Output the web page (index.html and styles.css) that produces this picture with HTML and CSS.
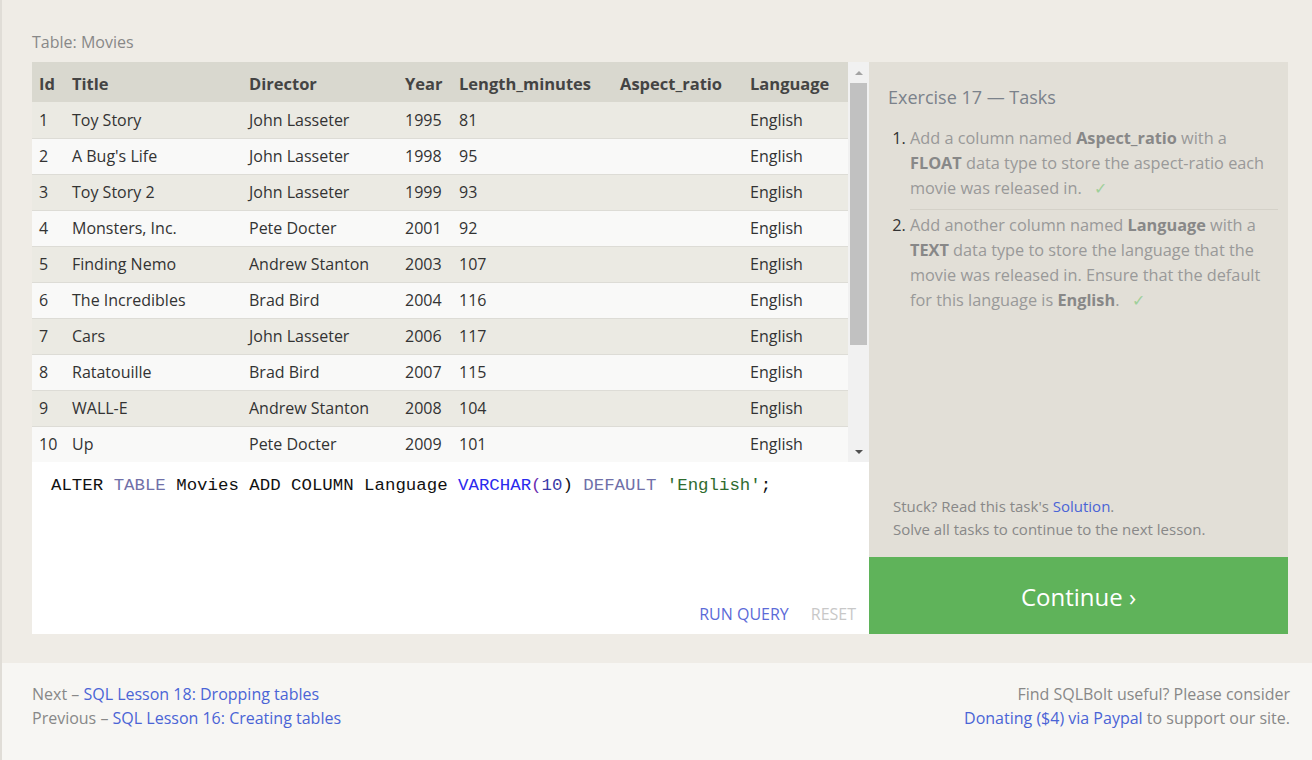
FILE: index.html
```html
<!DOCTYPE html>
<html>
<head>
<meta charset="utf-8">
<link rel="stylesheet" href="styles.css">
</head>
<body>
<div class="main">
  <div class="table-label">Table: Movies</div>
  <div class="lesson">
    <div class="left">
      <div class="results">
        <table class="movies">
          <colgroup>
            <col class="c-id"><col class="c-title"><col class="c-dir"><col class="c-year"><col class="c-len"><col class="c-asp"><col class="c-lang">
          </colgroup>
          <thead>
            <tr><th>Id</th><th>Title</th><th>Director</th><th>Year</th><th>Length_minutes</th><th>Aspect_ratio</th><th>Language</th></tr>
          </thead>
          <tbody>
            <tr><td>1</td><td>Toy Story</td><td>John Lasseter</td><td>1995</td><td>81</td><td></td><td>English</td></tr>
            <tr><td>2</td><td>A Bug's Life</td><td>John Lasseter</td><td>1998</td><td>95</td><td></td><td>English</td></tr>
            <tr><td>3</td><td>Toy Story 2</td><td>John Lasseter</td><td>1999</td><td>93</td><td></td><td>English</td></tr>
            <tr><td>4</td><td>Monsters, Inc.</td><td>Pete Docter</td><td>2001</td><td>92</td><td></td><td>English</td></tr>
            <tr><td>5</td><td>Finding Nemo</td><td>Andrew Stanton</td><td>2003</td><td>107</td><td></td><td>English</td></tr>
            <tr><td>6</td><td>The Incredibles</td><td>Brad Bird</td><td>2004</td><td>116</td><td></td><td>English</td></tr>
            <tr><td>7</td><td>Cars</td><td>John Lasseter</td><td>2006</td><td>117</td><td></td><td>English</td></tr>
            <tr><td>8</td><td>Ratatouille</td><td>Brad Bird</td><td>2007</td><td>115</td><td></td><td>English</td></tr>
            <tr><td>9</td><td>WALL-E</td><td>Andrew Stanton</td><td>2008</td><td>104</td><td></td><td>English</td></tr>
            <tr><td>10</td><td>Up</td><td>Pete Docter</td><td>2009</td><td>101</td><td></td><td>English</td></tr>
          </tbody>
        </table>
        <div class="scrollbar">
          <div class="arrow up"></div>
          <div class="track"><div class="thumb"></div></div>
          <div class="arrow down"></div>
        </div>
      </div>
      <div class="editor">
        <div class="code"><span class="k">ALTER</span> <span class="kw">TABLE</span> Movies ADD COLUMN Language <span class="ty">VARCHAR</span><span class="pn">(</span><span class="num">10</span>) <span class="kw">DEFAULT</span> <span class="str">'English'</span>;</div>
        <div class="actions">
          <span class="run">RUN QUERY</span>
          <span class="reset">RESET</span>
        </div>
      </div>
    </div>
    <div class="right">
      <div class="tasks">
        <div class="tasks-title">Exercise 17 — Tasks</div>
        <ol class="task-list">
          <li class="done">Add a column named <b>Aspect_ratio</b> with a <b>FLOAT</b> data type to store the aspect-ratio each movie was released in. <span class="check">✓</span></li>
          <li class="done">Add another column named <b>Language</b> with a <b>TEXT</b> data type to store the language that the movie was released in. Ensure that the default for this language is <b>English</b>. <span class="check">✓</span></li>
        </ol>
        <div class="spacer"></div>
        <div class="help">
          <div>Stuck? Read this task's <a class="link">Solution</a>.</div>
          <div>Solve all tasks to continue to the next lesson.</div>
        </div>
      </div>
      <div class="continue">Continue ›</div>
    </div>
  </div>
</div>
<div class="footer">
  <div class="nav">
    <div>Next – <a class="link">SQL Lesson 18: Dropping tables</a></div>
    <div>Previous – <a class="link">SQL Lesson 16: Creating tables</a></div>
  </div>
  <div class="donate">
    <div>Find SQLBolt useful? Please consider</div>
    <div><a class="link">Donating ($4) via Paypal</a> to support our site.</div>
  </div>
</div>
</body>
</html>
```

FILE: styles.css
```css
html, body {
  margin: 0;
  padding: 0;
}
body {
  background: #efece6;
  border-left: 2px solid #e0ddd7;
  font-family: "Open Sans", "Noto Sans", sans-serif;
  color: #444;
  height: 760px;
  box-sizing: border-box;
  overflow: hidden;
}
.main {
  padding: 31px 24px 29px 30px;
  height: 663px;
  box-sizing: border-box;
}
.table-label {
  font-size: 16px;
  color: #888;
  line-height: 22px;
  height: 31px;
}
.lesson {
  display: flex;
  height: 572px;
}
.left {
  width: 837px;
  display: flex;
  flex-direction: column;
}
.results {
  display: flex;
  height: 400px;
  background: #f9f9f8;
}
.movies {
  width: 816px;
  border-collapse: collapse;
  table-layout: fixed;
  font-size: 16px;
  align-self: flex-start;
}
.c-id { width: 33px; }
.c-title { width: 177px; }
.c-dir { width: 156px; }
.c-year { width: 54px; }
.c-len { width: 161px; }
.c-asp { width: 130px; }
.c-lang { width: 105px; }
.movies th {
  background: #d9d8cf;
  color: #444;
  font-weight: 700;
  text-align: left;
  height: 40px;
  padding: 2px 0 0 7px;
  font-size: 16.5px;
  box-sizing: border-box;
  white-space: nowrap;
}
.movies td {
  height: 36px;
  padding: 0 0 0 7px;
  color: #333;
  border-bottom: 1px solid #dddcd6;
  box-sizing: border-box;
  white-space: nowrap;
}
.movies tbody tr:nth-child(odd) td { background: #ebeae3; }
.movies tbody tr:nth-child(even) td { background: #f9f9f8; }
.scrollbar {
  width: 21px;
  background: #f1f1f1;
  display: flex;
  flex-direction: column;
}
.arrow {
  height: 21px;
  display: flex;
  align-items: center;
  justify-content: center;
}
.arrow.up::before {
  content: "";
  border-left: 4px solid transparent;
  border-right: 4px solid transparent;
  border-bottom: 4px solid #a3a3a3;
}
.arrow.down::before {
  content: "";
  border-left: 4px solid transparent;
  border-right: 4px solid transparent;
  border-top: 4px solid #505050;
}
.track {
  flex: 1;
  padding: 0 2px;
}
.thumb {
  background: #c1c1c1;
  height: 262px;
}
.editor {
  flex: 1;
  background: #fff;
  display: flex;
  flex-direction: column;
  justify-content: space-between;
  padding: 13px 13px 9px 19px;
}
.code {
  font-family: "Liberation Mono", "DejaVu Sans Mono", monospace;
  font-size: 17.4px;
  line-height: 22px;
  color: #111;
  white-space: pre;
}
.code .kw { color: #7070a8; }
.code .ty { color: #2a2aee; }
.code .pn { color: #6a2bb0; }
.code .num { color: #3a3aa8; }
.code .str { color: #2f6b2f; }
.actions {
  display: flex;
  justify-content: flex-end;
  gap: 22px;
  font-size: 16px;
  line-height: 22px;
}
.run { color: #5b6ad8; }
.reset { color: #c8c8c8; }
.right {
  width: 419px;
  display: flex;
  flex-direction: column;
}
.tasks {
  flex: 1;
  background: #e2dfd7;
  padding: 23px 10px 16px 19px;
  display: flex;
  flex-direction: column;
}
.tasks-title {
  font-size: 18px;
  color: #7b828b;
  line-height: 24px;
}
.task-list {
  margin: 17px 0 0 0;
  padding: 0 0 0 22px;
  font-size: 16.3px;
  line-height: 25px;
  color: #333;
}
.task-list li {
  padding: 0 0 4px 0;
  margin-bottom: 4px;
}
.task-list li::marker { color: #333; }
.task-list li + li {
  border-top: 1px solid #d4d1c8;
  padding-top: 3px;
}
.task-list li.done { color: #999; }
.task-list li.done b { color: #888; }
.check {
  color: #9fd09a;
  margin-left: 8px;
}
.spacer { flex: 1; }
.help {
  font-size: 15px;
  line-height: 23px;
  color: #888;
  padding-left: 5px;
}
.link { color: #4a64d6; text-decoration: none; }
.continue {
  height: 77px;
  background: #5fb35a;
  color: #fff;
  font-size: 24px;
  display: flex;
  align-items: center;
  justify-content: center;
  padding-top: 2px;
  box-sizing: border-box;
}
.footer {
  background: #f7f6f3;
  height: 97px;
  display: flex;
  justify-content: space-between;
  padding: 19px 22px 0 30px;
  box-sizing: border-box;
  font-size: 16px;
  line-height: 24px;
  color: #888;
}
.donate { text-align: right; }
```
